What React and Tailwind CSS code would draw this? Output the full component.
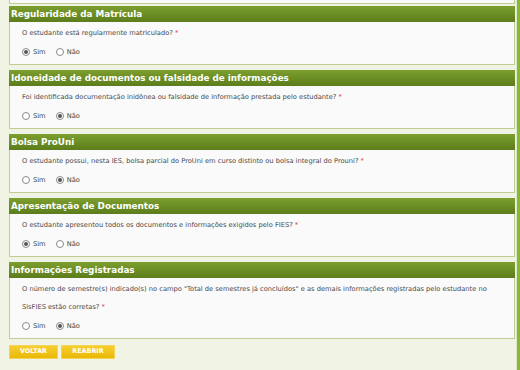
import React from "react";

const sections = [
  {
    title: "Regularidade da Matrícula",
    lines: ["O estudante está regularmente matriculado?"],
    value: "sim",
  },
  {
    title: "Idoneidade de documentos ou falsidade de informações",
    lines: ["Foi identificada documentação inidônea ou falsidade de informação prestada pelo estudante?"],
    value: "nao",
  },
  {
    title: "Bolsa ProUni",
    lines: ["O estudante possui, nesta IES, bolsa parcial do ProUni em curso distinto ou bolsa integral do Prouni?"],
    value: "nao",
  },
  {
    title: "Apresentação de Documentos",
    lines: ["O estudante apresentou todos os documentos e informações exigidos pelo FIES?"],
    value: "sim",
  },
  {
    title: "Informações Registradas",
    lines: [
      "O número de semestre(s) indicado(s) no campo \"Total de semestres já concluídos\" e as demais informações registradas pelo estudante no",
      "SisFIES estão corretas?",
    ],
    value: "nao",
  },
];

function Radio({ checked, label }) {
  return (
    <span className="flex items-center gap-[3px]">
      <span className="w-[8px] h-[8px] rounded-full border border-[#8a8a8a] bg-white flex items-center justify-center">
        {checked && <span className="w-[4px] h-[4px] rounded-full bg-[#555]" />}
      </span>
      <span className="text-[#444]">{label}</span>
    </span>
  );
}

function Section({ s }) {
  return (
    <div className="mt-[5px] border border-[#bfcd93] bg-[#fafafa]">
      <div className="h-[16px] bg-gradient-to-b from-[#7d9f2e] to-[#5c7d1b] flex items-center pl-[2px] -mx-px -mt-px">
        <span className="text-white font-bold text-[8.8px] leading-none">
          {s.title}
        </span>
      </div>
      <div className="pl-[12px] pt-[2px] pb-[4px] text-[6.7px] text-[#4a4a4a]">
        {s.lines.map((l, i) => (
          <p key={i} className="leading-[18px] whitespace-nowrap">
            {l}
            {i === s.lines.length - 1 && <span className="text-[#e0303a]"> *</span>}
          </p>
        ))}
        <div className="mt-[2px] h-[16px] flex items-center gap-[10px]">
          <Radio checked={s.value === "sim"} label="Sim" />
          <Radio checked={s.value === "nao"} label="Não" />
        </div>
      </div>
    </div>
  );
}

export default function App() {
  return (
    <div
      className="w-[520px] h-[370px] bg-[#f1f4e4] flex overflow-hidden"
      style={{ fontFamily: '"DejaVu Sans", Verdana, sans-serif' }}
    >
      <div className="w-[516px] pl-[9px] pr-[1px]">
        <div className="h-[4px] border-x border-b border-[#bfcd93] bg-[#fafafa]" />
        <div className="-mt-[3px]">
          {sections.map((s, i) => (
            <Section key={i} s={s} />
          ))}
        </div>
        <div className="mt-[6px] flex gap-[3px]">
          <button className="w-[49px] h-[14px] bg-gradient-to-b from-[#f6cf2e] to-[#e9b800] border border-[#f3d35a] text-white font-bold text-[6.4px] flex items-center justify-center">
            VOLTAR
          </button>
          <button className="w-[54px] h-[14px] bg-gradient-to-b from-[#f6cf2e] to-[#e9b800] border border-[#f3d35a] text-white font-bold text-[6.4px] flex items-center justify-center">
            REABRIR
          </button>
        </div>
      </div>
      <div className="w-[1px] bg-[#dfe8c6]" />
      <div className="w-[3px] bg-[#86b63a]" />
    </div>
  );
}
